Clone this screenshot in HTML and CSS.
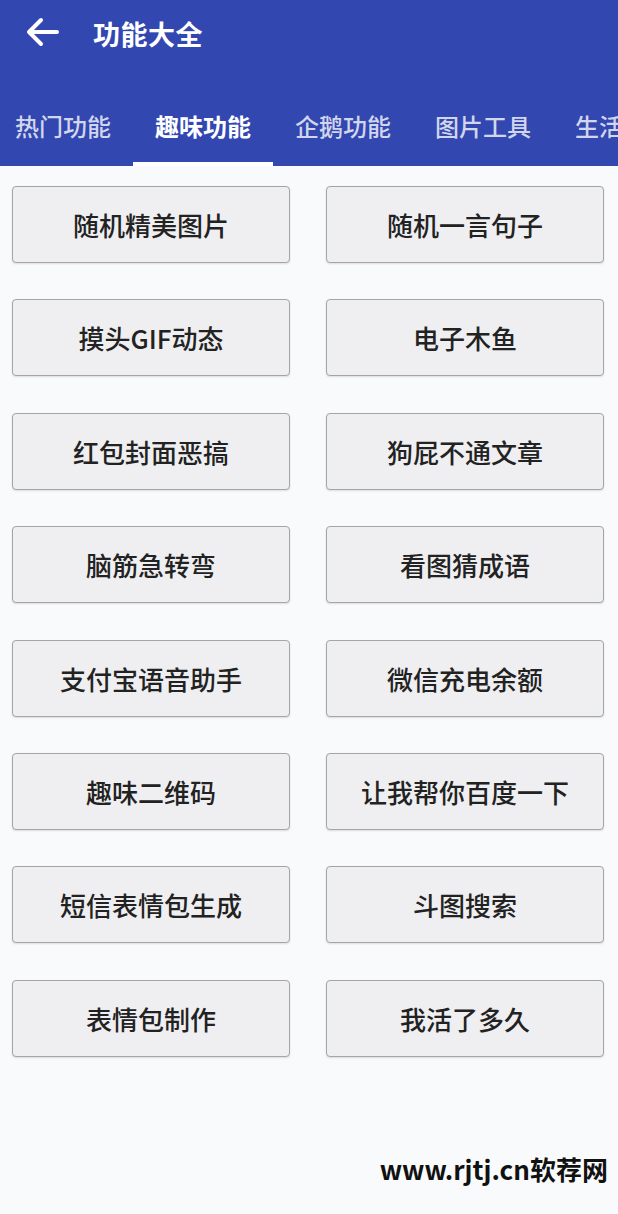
FILE: index.html
```html
<!DOCTYPE html>
<html lang="zh-CN">
<head>
<meta charset="utf-8">
<title>功能大全</title>
<link rel="stylesheet" href="styles.css">
</head>
<body>
<div class="page">
  <header class="header">
    <div class="toolbar">
      <svg class="back" width="36" height="32" viewBox="0 0 36 32">
        <path d="M32 16H5M16 4L4 16L16 28" fill="none" stroke="#fff" stroke-width="4" stroke-linecap="round" stroke-linejoin="round"/>
      </svg>
      <h1 class="title">功能大全</h1>
    </div>
    <nav class="tabs">
      <div class="tab">热门功能</div>
      <div class="tab active">趣味功能</div>
      <div class="tab">企鹅功能</div>
      <div class="tab">图片工具</div>
      <div class="tab">生活工具</div>
    </nav>
  </header>
  <main class="grid">
    <div class="btn">随机精美图片</div>
    <div class="btn">随机一言句子</div>
    <div class="btn">摸头GIF动态</div>
    <div class="btn">电子木鱼</div>
    <div class="btn">红包封面恶搞</div>
    <div class="btn">狗屁不通文章</div>
    <div class="btn">脑筋急转弯</div>
    <div class="btn">看图猜成语</div>
    <div class="btn">支付宝语音助手</div>
    <div class="btn">微信充电余额</div>
    <div class="btn">趣味二维码</div>
    <div class="btn">让我帮你百度一下</div>
    <div class="btn">短信表情包生成</div>
    <div class="btn">斗图搜索</div>
    <div class="btn">表情包制作</div>
    <div class="btn">我活了多久</div>
  </main>
  <div class="watermark">www.rjtj.cn软荐网</div>
</div>
</body>
</html>
```
FILE: styles.css
```css
html, body {
  margin: 0;
  padding: 0;
}
body {
  width: 618px;
  height: 1214px;
  overflow: hidden;
  background: #f9fafc;
  font-family: "Noto Sans CJK SC", "Noto Sans", sans-serif;
}
.page {
  position: relative;
  height: 1214px;
}
.header {
  background: #3347b1;
  height: 166px;
  overflow: hidden;
}
.toolbar {
  display: flex;
  align-items: center;
  height: 66px;
  padding-left: 25px;
}
.back {
  display: block;
  margin-top: -2px;
}
.title {
  margin: 0 0 0 32px;
  color: #fff;
  font-size: 27px;
  font-weight: 700;
  letter-spacing: 0.5px;
}
.tabs {
  display: flex;
  margin-left: -7px;
  margin-top: 20px;
  height: 80px;
  white-space: nowrap;
}
.tab {
  flex: 0 0 auto;
  width: 140px;
  height: 80px;
  box-sizing: border-box;
  display: flex;
  align-items: center;
  justify-content: center;
  color: rgba(255, 255, 255, 0.78);
  font-size: 24px;
  font-weight: 500;
  border-bottom: 4px solid transparent;
  padding-top: 2px;
}
.tab.active {
  color: #fff;
  font-weight: 700;
  border-bottom-color: #fff;
}
.grid {
  display: grid;
  grid-template-columns: 278px 278px;
  column-gap: 36px;
  row-gap: 36.4px;
  padding: 20px 0 0 12px;
}
.btn {
  height: 77px;
  box-sizing: border-box;
  display: flex;
  align-items: center;
  justify-content: center;
  background: #efeff1;
  border: 1px solid #a5a5a8;
  border-radius: 4px;
  box-shadow: 0 1px 2px rgba(0, 0, 0, 0.12);
  color: #222;
  font-size: 26px;
  font-weight: 500;
}
.watermark {
  position: absolute;
  right: 10px;
  top: 1150px;
  font-size: 26px;
  font-weight: 700;
  color: #111;
}
```
